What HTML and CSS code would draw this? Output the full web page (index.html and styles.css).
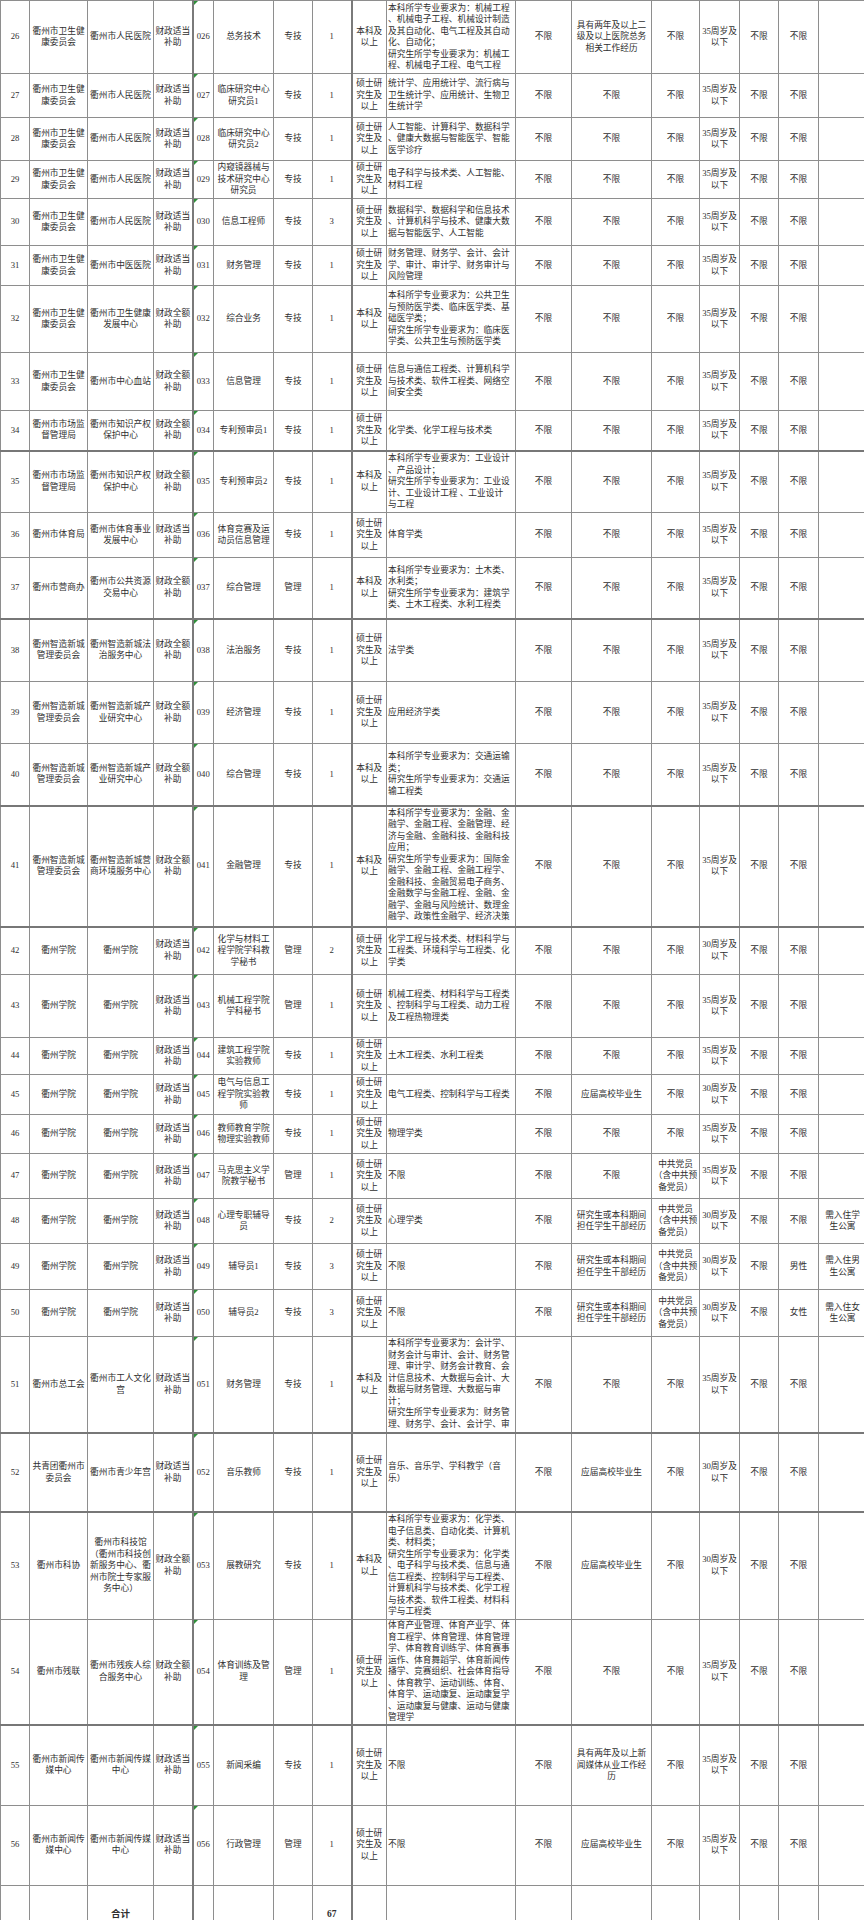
FILE: index.html
```html
<!DOCTYPE html>
<html lang="zh-CN">
<head>
<meta charset="utf-8">
<title>招聘岗位表</title>
<link rel="stylesheet" href="styles.css">
</head>
<body>
<div class="sheet">
<table class="grid">
<colgroup>
<col class="w29"><col class="w58"><col class="w66"><col class="w39"><col class="w21"><col class="w60"><col class="w39"><col class="w39"><col class="w35"><col class="w129"><col class="w56"><col class="w80"><col class="w48"><col class="w40"><col class="w39"><col class="w40"><col class="w48">
</colgroup>
<tbody>
<tr class="h73"><td>26</td><td>衢州市卫生健<br>康委员会</td><td>衢州市人民医院</td><td>财政适当<br>补助</td><td class="code">026</td><td>总务技术</td><td>专技</td><td>1</td><td>本科及<br>以上</td><td class="major">本科所学专业要求为：机械工程<br>、机械电子工程、机械设计制造<br>及其自动化、电气工程及其自动<br>化、自动化；<br>研究生所学专业要求为：机械工<br>程、机械电子工程、电气工程</td><td>不限</td><td>具有两年及以上二<br>级及以上医院总务<br>相关工作经历</td><td>不限</td><td>35周岁及<br>以下</td><td>不限</td><td>不限</td><td></td></tr>
<tr class="h44"><td>27</td><td>衢州市卫生健<br>康委员会</td><td>衢州市人民医院</td><td>财政适当<br>补助</td><td class="code">027</td><td>临床研究中心<br>研究员1</td><td>专技</td><td>1</td><td>硕士研<br>究生及<br>以上</td><td class="major">统计学、应用统计学、流行病与<br>卫生统计学、应用统计、生物卫<br>生统计学</td><td>不限</td><td>不限</td><td>不限</td><td>35周岁及<br>以下</td><td>不限</td><td>不限</td><td></td></tr>
<tr class="h43"><td>28</td><td>衢州市卫生健<br>康委员会</td><td>衢州市人民医院</td><td>财政适当<br>补助</td><td class="code">028</td><td>临床研究中心<br>研究员2</td><td>专技</td><td>1</td><td>硕士研<br>究生及<br>以上</td><td class="major">人工智能、计算科学、数据科学<br>、健康大数据与智能医学、智能<br>医学诊疗</td><td>不限</td><td>不限</td><td>不限</td><td>35周岁及<br>以下</td><td>不限</td><td>不限</td><td></td></tr>
<tr class="h38"><td>29</td><td>衢州市卫生健<br>康委员会</td><td>衢州市人民医院</td><td>财政适当<br>补助</td><td class="code">029</td><td>内窥镜器械与<br>技术研究中心<br>研究员</td><td>专技</td><td>1</td><td>硕士研<br>究生及<br>以上</td><td class="major">电子科学与技术类、人工智能、<br>材料工程</td><td>不限</td><td>不限</td><td>不限</td><td>35周岁及<br>以下</td><td>不限</td><td>不限</td><td></td></tr>
<tr class="h47"><td>30</td><td>衢州市卫生健<br>康委员会</td><td>衢州市人民医院</td><td>财政适当<br>补助</td><td class="code">030</td><td>信息工程师</td><td>专技</td><td>3</td><td>硕士研<br>究生及<br>以上</td><td class="major">数据科学、数据科学和信息技术<br>、计算机科学与技术、健康大数<br>据与智能医学、人工智能</td><td>不限</td><td>不限</td><td>不限</td><td>35周岁及<br>以下</td><td>不限</td><td>不限</td><td></td></tr>
<tr class="h40"><td>31</td><td>衢州市卫生健<br>康委员会</td><td>衢州市中医医院</td><td>财政适当<br>补助</td><td class="code">031</td><td>财务管理</td><td>专技</td><td>1</td><td>硕士研<br>究生及<br>以上</td><td class="major">财务管理、财务学、会计、会计<br>学、审计、审计学、财务审计与<br>风险管理</td><td>不限</td><td>不限</td><td>不限</td><td>35周岁及<br>以下</td><td>不限</td><td>不限</td><td></td></tr>
<tr class="h67"><td>32</td><td>衢州市卫生健<br>康委员会</td><td>衢州市卫生健康<br>发展中心</td><td>财政全额<br>补助</td><td class="code">032</td><td>综合业务</td><td>专技</td><td>1</td><td>本科及<br>以上</td><td class="major">本科所学专业要求为：公共卫生<br>与预防医学类、临床医学类、基<br>础医学类；<br>研究生所学专业要求为：临床医<br>学类、公共卫生与预防医学类</td><td>不限</td><td>不限</td><td>不限</td><td>35周岁及<br>以下</td><td>不限</td><td>不限</td><td></td></tr>
<tr class="h58"><td>33</td><td>衢州市卫生健<br>康委员会</td><td>衢州市中心血站</td><td>财政全额<br>补助</td><td class="code">033</td><td>信息管理</td><td>专技</td><td>1</td><td>硕士研<br>究生及<br>以上</td><td class="major">信息与通信工程类、计算机科学<br>与技术类、软件工程类、网络空<br>间安全类</td><td>不限</td><td>不限</td><td>不限</td><td>35周岁及<br>以下</td><td>不限</td><td>不限</td><td></td></tr>
<tr class="h40"><td>34</td><td>衢州市市场监<br>督管理局</td><td>衢州市知识产权<br>保护中心</td><td>财政全额<br>补助</td><td class="code">034</td><td>专利预审员1</td><td>专技</td><td>1</td><td>硕士研<br>究生及<br>以上</td><td class="major">化学类、化学工程与技术类</td><td>不限</td><td>不限</td><td>不限</td><td>35周岁及<br>以下</td><td>不限</td><td>不限</td><td></td></tr>
<tr class="h62 thick"><td>35</td><td>衢州市市场监<br>督管理局</td><td>衢州市知识产权<br>保护中心</td><td>财政全额<br>补助</td><td class="code">035</td><td>专利预审员2</td><td>专技</td><td>1</td><td>本科及<br>以上</td><td class="major">本科所学专业要求为：工业设计<br>、产品设计；<br>研究生所学专业要求为：工业设<br>计、工业设计工程 、工业设计<br>与工程</td><td>不限</td><td>不限</td><td>不限</td><td>35周岁及<br>以下</td><td>不限</td><td>不限</td><td></td></tr>
<tr class="h45"><td>36</td><td>衢州市体育局</td><td>衢州市体育事业<br>发展中心</td><td>财政适当<br>补助</td><td class="code">036</td><td>体育竞赛及运<br>动员信息管理</td><td>专技</td><td>1</td><td>硕士研<br>究生及<br>以上</td><td class="major">体育学类</td><td>不限</td><td>不限</td><td>不限</td><td>35周岁及<br>以下</td><td>不限</td><td>不限</td><td></td></tr>
<tr class="h61"><td>37</td><td>衢州市营商办</td><td>衢州市公共资源<br>交易中心</td><td>财政全额<br>补助</td><td class="code">037</td><td>综合管理</td><td>管理</td><td>1</td><td>本科及<br>以上</td><td class="major">本科所学专业要求为：土木类、<br>水利类；<br>研究生所学专业要求为：建筑学<br>类、土木工程类、水利工程类</td><td>不限</td><td>不限</td><td>不限</td><td>35周岁及<br>以下</td><td>不限</td><td>不限</td><td></td></tr>
<tr class="h63 thick"><td>38</td><td>衢州智造新城<br>管理委员会</td><td>衢州智造新城法<br>治服务中心</td><td>财政全额<br>补助</td><td class="code">038</td><td>法治服务</td><td>专技</td><td>1</td><td>硕士研<br>究生及<br>以上</td><td class="major">法学类</td><td>不限</td><td>不限</td><td>不限</td><td>35周岁及<br>以下</td><td>不限</td><td>不限</td><td></td></tr>
<tr class="h62"><td>39</td><td>衢州智造新城<br>管理委员会</td><td>衢州智造新城产<br>业研究中心</td><td>财政全额<br>补助</td><td class="code">039</td><td>经济管理</td><td>专技</td><td>1</td><td>硕士研<br>究生及<br>以上</td><td class="major">应用经济学类</td><td>不限</td><td>不限</td><td>不限</td><td>35周岁及<br>以下</td><td>不限</td><td>不限</td><td></td></tr>
<tr class="h62"><td>40</td><td>衢州智造新城<br>管理委员会</td><td>衢州智造新城产<br>业研究中心</td><td>财政全额<br>补助</td><td class="code">040</td><td>综合管理</td><td>专技</td><td>1</td><td>本科及<br>以上</td><td class="major">本科所学专业要求为：交通运输<br>类；<br>研究生所学专业要求为：交通运<br>输工程类</td><td>不限</td><td>不限</td><td>不限</td><td>35周岁及<br>以下</td><td>不限</td><td>不限</td><td></td></tr>
<tr class="h120 thick"><td>41</td><td>衢州智造新城<br>管理委员会</td><td>衢州智造新城营<br>商环境服务中心</td><td>财政全额<br>补助</td><td class="code">041</td><td>金融管理</td><td>专技</td><td>1</td><td>本科及<br>以上</td><td class="major top"><div class="clip c118">本科所学专业要求为：金融、金<br>融学、金融工程、金融管理、经<br>济与金融、金融科技、金融科技<br>应用；<br>研究生所学专业要求为：国际金<br>融学、金融工程、金融工程学、<br>金融科技、金融贸易电子商务、<br>金融数学与金融工程、金融、金<br>融学、金融与风险统计、数理金<br>融学、政策性金融学、经济决策</div></td><td>不限</td><td>不限</td><td>不限</td><td>35周岁及<br>以下</td><td>不限</td><td>不限</td><td></td></tr>
<tr class="h48 thick"><td>42</td><td>衢州学院</td><td>衢州学院</td><td>财政适当<br>补助</td><td class="code">042</td><td>化学与材料工<br>程学院学科教<br>学秘书</td><td>管理</td><td>2</td><td>硕士研<br>究生及<br>以上</td><td class="major">化学工程与技术类、材料科学与<br>工程类、环境科学与工程类、化<br>学类</td><td>不限</td><td>不限</td><td>不限</td><td>30周岁及<br>以下</td><td>不限</td><td>不限</td><td></td></tr>
<tr class="h63"><td>43</td><td>衢州学院</td><td>衢州学院</td><td>财政适当<br>补助</td><td class="code">043</td><td>机械工程学院<br>学科秘书</td><td>管理</td><td>1</td><td>硕士研<br>究生及<br>以上</td><td class="major">机械工程类、材料科学与工程类<br>、控制科学与工程类、动力工程<br>及工程热物理类</td><td>不限</td><td>不限</td><td>不限</td><td>35周岁及<br>以下</td><td>不限</td><td>不限</td><td></td></tr>
<tr class="h37"><td>44</td><td>衢州学院</td><td>衢州学院</td><td>财政适当<br>补助</td><td class="code">044</td><td>建筑工程学院<br>实验教师</td><td>专技</td><td>1</td><td>硕士研<br>究生及<br>以上</td><td class="major">土木工程类、水利工程类</td><td>不限</td><td>不限</td><td>不限</td><td>35周岁及<br>以下</td><td>不限</td><td>不限</td><td></td></tr>
<tr class="h40"><td>45</td><td>衢州学院</td><td>衢州学院</td><td>财政适当<br>补助</td><td class="code">045</td><td>电气与信息工<br>程学院实验教<br>师</td><td>专技</td><td>1</td><td>硕士研<br>究生及<br>以上</td><td class="major">电气工程类、控制科学与工程类</td><td>不限</td><td>应届高校毕业生</td><td>不限</td><td>30周岁及<br>以下</td><td>不限</td><td>不限</td><td></td></tr>
<tr class="h39"><td>46</td><td>衢州学院</td><td>衢州学院</td><td>财政适当<br>补助</td><td class="code">046</td><td>教师教育学院<br>物理实验教师</td><td>专技</td><td>1</td><td>硕士研<br>究生及<br>以上</td><td class="major">物理学类</td><td>不限</td><td>不限</td><td>不限</td><td>35周岁及<br>以下</td><td>不限</td><td>不限</td><td></td></tr>
<tr class="h45"><td>47</td><td>衢州学院</td><td>衢州学院</td><td>财政适当<br>补助</td><td class="code">047</td><td>马克思主义学<br>院教学秘书</td><td>管理</td><td>1</td><td>硕士研<br>究生及<br>以上</td><td class="major">不限</td><td>不限</td><td>不限</td><td>中共党员<br>（含中共预<br>备党员）</td><td>35周岁及<br>以下</td><td>不限</td><td>不限</td><td></td></tr>
<tr class="h45"><td>48</td><td>衢州学院</td><td>衢州学院</td><td>财政适当<br>补助</td><td class="code">048</td><td>心理专职辅导<br>员</td><td>专技</td><td>2</td><td>硕士研<br>究生及<br>以上</td><td class="major">心理学类</td><td>不限</td><td>研究生或本科期间<br>担任学生干部经历</td><td>中共党员<br>（含中共预<br>备党员）</td><td>30周岁及<br>以下</td><td>不限</td><td>不限</td><td>需入住学<br>生公寓</td></tr>
<tr class="h46"><td>49</td><td>衢州学院</td><td>衢州学院</td><td>财政适当<br>补助</td><td class="code">049</td><td>辅导员1</td><td>专技</td><td>3</td><td>硕士研<br>究生及<br>以上</td><td class="major">不限</td><td>不限</td><td>研究生或本科期间<br>担任学生干部经历</td><td>中共党员<br>（含中共预<br>备党员）</td><td>30周岁及<br>以下</td><td>不限</td><td>男性</td><td>需入住男<br>生公寓</td></tr>
<tr class="h47"><td>50</td><td>衢州学院</td><td>衢州学院</td><td>财政适当<br>补助</td><td class="code">050</td><td>辅导员2</td><td>专技</td><td>3</td><td>硕士研<br>究生及<br>以上</td><td class="major">不限</td><td>不限</td><td>研究生或本科期间<br>担任学生干部经历</td><td>中共党员<br>（含中共预<br>备党员）</td><td>30周岁及<br>以下</td><td>不限</td><td>女性</td><td>需入住女<br>生公寓</td></tr>
<tr class="h96"><td>51</td><td>衢州市总工会</td><td>衢州市工人文化<br>宫</td><td>财政适当<br>补助</td><td class="code">051</td><td>财务管理</td><td>专技</td><td>1</td><td>本科及<br>以上</td><td class="major top"><div class="clip c94">本科所学专业要求为：会计学、<br>财务会计与审计、会计、财务管<br>理、审计学、财务会计教育、会<br>计信息技术、大数据与会计、大<br>数据与财务管理、大数据与审<br>计；<br>研究生所学专业要求为：财务管<br>理、财务学、会计、会计学、审</div></td><td>不限</td><td>不限</td><td>不限</td><td>35周岁及<br>以下</td><td>不限</td><td>不限</td><td></td></tr>
<tr class="h79 thick"><td>52</td><td>共青团衢州市<br>委员会</td><td>衢州市青少年宫</td><td>财政适当<br>补助</td><td class="code">052</td><td>音乐教师</td><td>专技</td><td>1</td><td>硕士研<br>究生及<br>以上</td><td class="major">音乐、音乐学、学科教学（音<br>乐）</td><td>不限</td><td>应届高校毕业生</td><td>不限</td><td>30周岁及<br>以下</td><td>不限</td><td>不限</td><td></td></tr>
<tr class="h107 thick"><td>53</td><td>衢州市科协</td><td>衢州市科技馆<br>（衢州市科技创<br>新服务中心、衢<br>州市院士专家服<br>务中心）</td><td>财政全额<br>补助</td><td class="code">053</td><td>展教研究</td><td>专技</td><td>1</td><td>本科及<br>以上</td><td class="major">本科所学专业要求为：化学类、<br>电子信息类、自动化类、计算机<br>类、材料类；<br>研究生所学专业要求为：化学类<br>、电子科学与技术类、信息与通<br>信工程类、控制科学与工程类、<br>计算机科学与技术类、化学工程<br>与技术类、软件工程类、材料科<br>学与工程类</td><td>不限</td><td>应届高校毕业生</td><td>不限</td><td>30周岁及<br>以下</td><td>不限</td><td>不限</td><td></td></tr>
<tr class="h106"><td>54</td><td>衢州市残联</td><td>衢州市残疾人综<br>合服务中心</td><td>财政全额<br>补助</td><td class="code">054</td><td>体育训练及管<br>理</td><td>管理</td><td>1</td><td>硕士研<br>究生及<br>以上</td><td class="major">体育产业管理、体育产业学、体<br>育工程学、体育管理、体育管理<br>学、体育教育训练学、体育赛事<br>运作、体育舞蹈学、体育新闻传<br>播学、竞赛组织、社会体育指导<br>、体育教学、运动训练、体育、<br>体育学、运动康复、运动康复学<br>、运动康复与健康、运动与健康<br>管理学</td><td>不限</td><td>不限</td><td>不限</td><td>35周岁及<br>以下</td><td>不限</td><td>不限</td><td></td></tr>
<tr class="h80 thick"><td>55</td><td>衢州市新闻传<br>媒中心</td><td>衢州市新闻传媒<br>中心</td><td>财政适当<br>补助</td><td class="code">055</td><td>新闻采编</td><td>专技</td><td>1</td><td>硕士研<br>究生及<br>以上</td><td class="major">不限</td><td>不限</td><td>具有两年及以上新<br>闻媒体从业工作经<br>历</td><td>不限</td><td>35周岁及<br>以下</td><td>不限</td><td>不限</td><td></td></tr>
<tr class="h80"><td>56</td><td>衢州市新闻传<br>媒中心</td><td>衢州市新闻传媒<br>中心</td><td>财政适当<br>补助</td><td class="code">056</td><td>行政管理</td><td>管理</td><td>1</td><td>硕士研<br>究生及<br>以上</td><td class="major">不限</td><td>不限</td><td>应届高校毕业生</td><td>不限</td><td>35周岁及<br>以下</td><td>不限</td><td>不限</td><td></td></tr>
<tr class="h60 total"><td></td><td></td><td class="strong">合计</td><td></td><td></td><td></td><td></td><td class="strong">67</td><td></td><td class="major"></td><td></td><td></td><td></td><td></td><td></td><td></td><td></td></tr>
</tbody>
</table>
</div>
</body>
</html>
```

FILE: styles.css
```css
html, body {
  margin: 0;
  padding: 0;
  background: #ffffff;
}

.sheet {
  width: 864px;
  overflow: hidden;
}

.grid {
  border-collapse: collapse;
  table-layout: fixed;
  width: 866px;
  font-family: "Liberation Serif", "Noto Sans CJK SC", serif;
  font-size: 8.7px;
  line-height: 11.5px;
  color: #2f2f2f;
}

.w29 { width: 29px; }
.w58 { width: 58px; }
.w66 { width: 66px; }
.w39 { width: 39px; }
.w21 { width: 21px; }
.w60 { width: 60px; }
.w35 { width: 35px; }
.w129 { width: 129px; }
.w56 { width: 56px; }
.w80 { width: 80px; }
.w48 { width: 48px; }
.w40 { width: 40px; }

.grid td {
  border: 1px solid #8e8e8e;
  padding: 0 1px;
  text-align: center;
  vertical-align: middle;
  white-space: nowrap;
  overflow: hidden;
}

.grid td:nth-child(5),
.grid td:nth-child(9) {
  border-left: 2px solid #7a7a7a;
}

.grid tr.thick > td {
  border-top: 2px solid #777777;
}

.grid td.major {
  text-align: left;
  padding-left: 1px;
}

.grid td.top {
  vertical-align: top;
  padding-top: 1px;
}

.clip { overflow: hidden; }
.c118 { height: 118px; }
.c94 { height: 94px; }

.code { position: relative; }
.code::before {
  content: "";
  position: absolute;
  left: 0;
  top: 0;
  border-top: 4px solid #2f8f3a;
  border-right: 4px solid transparent;
}

.strong {
  font-weight: bold;
  font-size: 9.5px;
}

.h37 { height: 37px; }
.h38 { height: 38px; }
.h39 { height: 39px; }
.h40 { height: 40px; }
.h43 { height: 43px; }
.h44 { height: 44px; }
.h45 { height: 45px; }
.h46 { height: 46px; }
.h47 { height: 47px; }
.h48 { height: 48px; }
.h58 { height: 58px; }
.h60 { height: 60px; }
.h61 { height: 61px; }
.h62 { height: 62px; }
.h63 { height: 63px; }
.h67 { height: 67px; }
.h73 { height: 73px; }
.h79 { height: 79px; }
.h80 { height: 80px; }
.h96 { height: 96px; }
.h106 { height: 106px; }
.h107 { height: 107px; }
.h120 { height: 120px; }
```
